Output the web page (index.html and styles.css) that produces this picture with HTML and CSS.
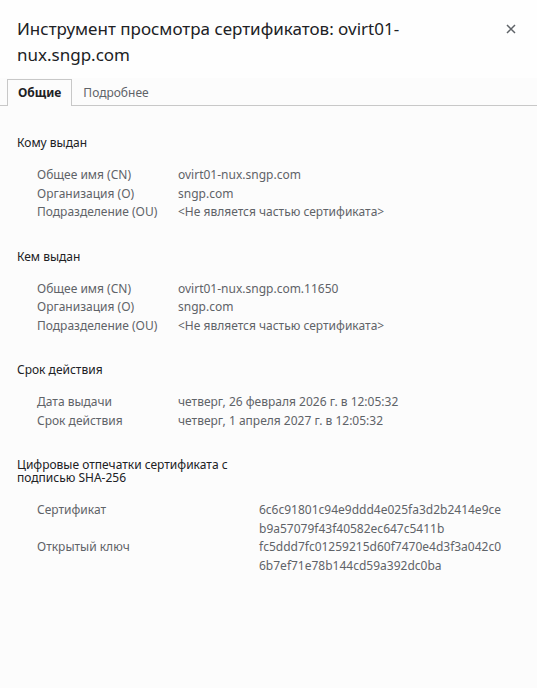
FILE: index.html
```html
<!DOCTYPE html>
<html lang="ru">
<head>
<meta charset="utf-8">
<link rel="stylesheet" href="styles.css">
</head>
<body>
<div class="dialog">
  <header class="head">
    <h1 class="title">Инструмент просмотра сертификатов: ovirt01-<wbr>nux.sngp.com</h1>
    <button class="close" aria-label="Закрыть">
      <svg width="10" height="10" viewBox="0 0 10 10"><path d="M1 1L9 9M9 1L1 9" stroke="#5f6368" stroke-width="1.5" fill="none"/></svg>
    </button>
  </header>
  <nav class="tabs">
    <div class="tab active">Общие</div>
    <div class="tab">Подробнее</div>
  </nav>
  <main class="content">
    <section class="sec">
      <h2 class="sec-title">Кому выдан</h2>
      <div class="grid">
        <div class="k">Общее имя (CN)</div><div class="v">ovirt01-nux.sngp.com</div>
        <div class="k">Организация (O)</div><div class="v">sngp.com</div>
        <div class="k">Подразделение (OU)</div><div class="v">&lt;Не является частью сертификата&gt;</div>
      </div>
    </section>
    <section class="sec">
      <h2 class="sec-title">Кем выдан</h2>
      <div class="grid">
        <div class="k">Общее имя (CN)</div><div class="v">ovirt01-nux.sngp.com.11650</div>
        <div class="k">Организация (O)</div><div class="v">sngp.com</div>
        <div class="k">Подразделение (OU)</div><div class="v">&lt;Не является частью сертификата&gt;</div>
      </div>
    </section>
    <section class="sec">
      <h2 class="sec-title">Срок действия</h2>
      <div class="grid">
        <div class="k">Дата выдачи</div><div class="v">четверг, 26 февраля 2026 г. в 12:05:32</div>
        <div class="k">Срок действия</div><div class="v">четверг, 1 апреля 2027 г. в 12:05:32</div>
      </div>
    </section>
    <section class="sec">
      <h2 class="sec-title narrow">Цифровые отпечатки сертификата с подписью SHA-256</h2>
      <div class="grid wide">
        <div class="k">Сертификат</div><div class="v hash">6c6c91801c94e9ddd4e025fa3d2b2414e9ceb9a57079f43f40582ec647c5411b</div>
        <div class="k">Открытый ключ</div><div class="v hash">fc5ddd7fc01259215d60f7470e4d3f3a042c06b7ef71e78b144cd59a392dc0ba</div>
      </div>
    </section>
  </main>
</div>
</body>
</html>
```

FILE: styles.css
```css
html, body {
  margin: 0;
  padding: 0;
  background: #fcfcfc;
}
body {
  font-family: "Noto Sans", "Open Sans", sans-serif;
  color: #202124;
  width: 537px;
  height: 688px;
  overflow: hidden;
}
.dialog {
  display: flex;
  flex-direction: column;
}
.head {
  display: flex;
  justify-content: space-between;
  align-items: flex-start;
  background: #fefefe;
  padding: 16px 17px 10px 17px;
}
.title {
  margin: 0;
  font-size: 17px;
  font-weight: 400;
  line-height: 26px;
  width: 400px;
  color: #202124;
}
.close {
  border: 0;
  background: transparent;
  padding: 0;
  margin-top: 6px;
  margin-right: 2px;
  width: 14px;
  height: 14px;
  display: flex;
  align-items: center;
  justify-content: center;
}
.tabs {
  display: flex;
  padding-left: 7px;
  border-bottom: 1px solid #c8c8c8;
  margin-top: 1px;
}
.tab {
  font-size: 12px;
  line-height: 16px;
  padding: 5px 10px 4px 10px;
  color: #5f6368;
  border: 1px solid transparent;
  border-bottom: 0;
  margin-bottom: -1px;
}
.tab.active {
  font-weight: 700;
  color: #202124;
  background: #fcfcfc;
  border-color: #c8c8c8;
  padding-bottom: 5px;
}
.content {
  padding: 30px 17px 0 17px;
}
.sec {
  margin-bottom: 28px;
}
.sec-title {
  margin: 0 0 17px 0;
  font-size: 12px;
  font-weight: 400;
  line-height: 13px;
  color: #202124;
}
.sec-title.narrow {
  width: 230px;
}
.grid {
  display: grid;
  grid-template-columns: 141px 1fr;
  padding-left: 20px;
  font-size: 12px;
  line-height: 18.5px;
  color: #5f6368;
}
.grid.wide {
  grid-template-columns: 222px 246px;
}
.hash {
  word-break: break-all;
}
```
